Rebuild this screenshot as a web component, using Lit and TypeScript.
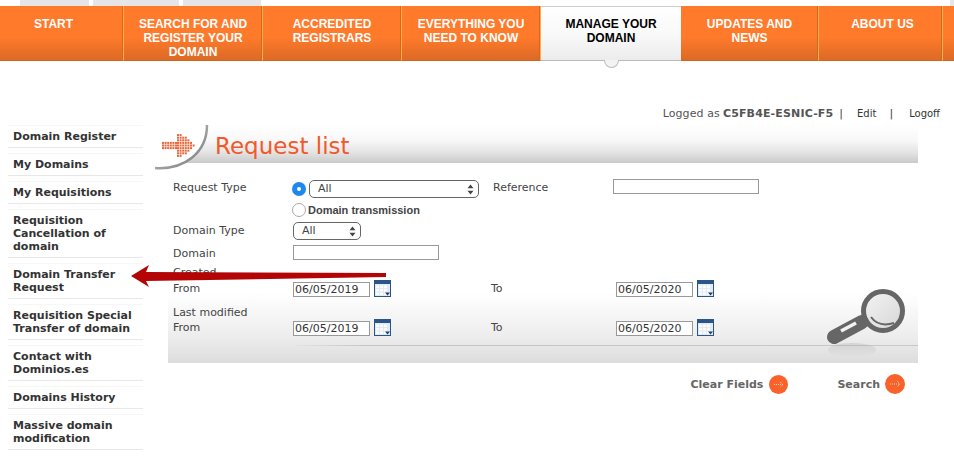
import { LitElement, html, css, svg } from "lit";
import { customElement } from "lit/decorators.js";

const NAV = [
  { t: "START", w: 124 },
  { t: "SEARCH FOR AND REGISTER YOUR DOMAIN", w: 139 },
  { t: "ACCREDITED REGISTRARS", w: 139 },
  { t: "EVERYTHING YOU NEED TO KNOW", w: 139 },
  { t: "MANAGE YOUR DOMAIN", w: 140, active: true },
  { t: "UPDATES AND NEWS", w: 138 },
  { t: "ABOUT US", w: 124 },
  { t: "", w: 11 },
];
const SIDE = [
  "Domain Register",
  "My Domains",
  "My Requisitions",
  "Requisition Cancellation of domain",
  "Domain Transfer Request",
  "Requisition Special Transfer of domain",
  "Contact with Dominios.es",
  "Domains History",
  "Massive domain modification",
];

const arrowDots = () => {
  const out: any[] = [];
  for (let i = 0; i < 6; i++) for (let r = -1; r <= 1; r++) out.push([i * 2.6, 12 + r * 2.6]);
  const spans = [4, 4, 3, 3, 2, 1, 0];
  spans.forEach((span, c) => {
    for (let r = -span; r <= span; r++) out.push([15 + c * 2.6, 12 + r * 2.6]);
  });
  return out;
};

const calendar = html`<svg class="cal" width="17" height="17" viewBox="0 0 17 17">
  <rect x="0" y="0" width="17" height="17" fill="#e3eaf3"/>
  <rect x="0" y="0" width="17" height="4" fill="#2a5588"/>
  <rect x="0" y="0" width="1" height="17" fill="#2a5588"/>
  <rect x="16" y="0" width="1" height="17" fill="#2a5588"/>
  <rect x="0" y="16" width="17" height="1" fill="#2a5588"/>
  ${[2, 6, 10].map((x) => [5.5, 9, 12.5].map((y) => svg`<rect x="${x}" y="${y}" width="3" height="2.5" fill="#fbfcfd"/>`))}
  <path d="M11 12.5h5l-2.5 3z" fill="#1f3f68"/>
</svg>`;

const arrows = html`<svg width="7" height="11" viewBox="0 0 7 11"><path d="M3.5 0.5L6.5 4.2H0.5zM3.5 10.5L0.5 6.8H6.5z" fill="#444"/></svg>`;

@customElement("app-root")
export class AppRoot extends LitElement {
  static styles = css`
    :host { display: block; position: relative; width: 954px; height: 471px; overflow: hidden; background: #fff;
      font-family: "DejaVu Sans", Verdana, sans-serif; font-size: 11px; color: #444; }
    .tabs { display: flex; height: 6px; padding-left: 20px; gap: 4px; position: relative; }
    .tabs i { display: block; height: 6px; background: #e6e6e6; }
    .tabs .end { position: absolute; right: 0; top: 0; width: 4px; }
    nav { display: flex; height: 55px; }
    .ni { box-sizing: border-box; flex: none; height: 55px; padding: 11px 12px 0; text-align: center; color: #fff;
      font: bold 12px/14px "Liberation Sans", Arial, sans-serif; position: relative;
      background: linear-gradient(#ff7a2b 0, #ff7a2b 58%, #dc6a25 100%); border-right: 1px solid #ffae4a;
      box-shadow: inset -1px 0 0 #d9661f; border-bottom: 1px solid #d0651f; }
    .ni:first-child { padding-right: 28px; }
    .ni:nth-child(7) { padding-left: 16px; }
    .ni:last-child { padding: 0; border-right: none; box-shadow: none; }
    .ni.active { color: #000; background: linear-gradient(#fff 0, #f9f9f9 50%, #ececec 100%); border-top: 1px solid #ccc;
      border-bottom: 1px solid #bbb; border-right: none; box-shadow: none; padding-top: 10px; padding-left: 20px; padding-right: 20px; }
    .notch { position: absolute; left: 63px; top: 53px; width: 13px; height: 7px; background: #f3f3f3;
      border: 1px solid #bbb; border-top: none; border-radius: 0 0 8px 8px; }
    .user { height: 64px; box-sizing: border-box; padding: 45px 14px 0 0; display: flex; justify-content: flex-end;
      line-height: 16px; color: #555; }
    .user .who { letter-spacing: 0.1px; }
    .user b { color: #555; margin-left: 3px; letter-spacing: 0.15px; } .user .sep { margin-left: 6px; color: #444; }
    .user a { color: #333; font-size: 10px; } .edit { margin-left: 14px; } .user .sep2 { margin-left: 13px; } .logoff { margin-left: 16px; }
    .body { display: flex; padding-left: 8px; }
    aside { width: 135px; margin-right: 25px; }
    .si { box-sizing: border-box; padding: 4px 5px 4px; margin-bottom: 5px; border-top: 1px solid #f6f6f6; border-bottom: 1px solid #e8e8e8;
      font-weight: bold; font-size: 11px; line-height: 13px; color: #333; }
    main { width: 750px; position: relative; }
    .band { height: 38px; box-sizing: border-box; padding-left: 47px; line-height: 42px; font-size: 23px; color: #f05a2a;
      background: linear-gradient(#fff 0, #f8f8f8 40%, #e4e4e4 72%, #c9c9c9 100%); position: relative; z-index: 1; }
    .swoosh { position: absolute; left: -14px; top: 0; }
    .panel { height: 200px; box-sizing: border-box; padding: 16px 0 0 5px; position: relative;
      background: linear-gradient(#fff 0, #fff 65%, #ececec 88%, #dcdcdc 100%); }
    .row { display: grid; grid-template-columns: 120px 200px 120px auto; line-height: 16px; justify-items: start; }
    .r1 { height: 21px; margin-top: 0; } .r2 { height: 19px; align-items: center; } .r3 { height: 24px; align-items: center; } .r4 { height: 20px; align-items: center; }
    .r5 { height: 37px; } .r6 { height: 37px; padding-top: 5px; box-sizing: border-box; line-height: 15px; }
    .dates { grid-template-columns: 120px 198px 125px auto; }
    .r1 .lab { padding-top: 1px; }
    .r4 > span { padding-top: 2px; }
    .ctl { display: flex; align-items: center; gap: 3px; height: 18px; margin-top: 1px; }
    .r2 .ctl { margin-top: 0; }
    .radio { box-sizing: border-box; width: 14px; height: 14px; border-radius: 50%; border: 1px solid #aaa; background: #fff; margin-left: -1px; flex: none; }
    .radio.on { background: #1e88ee; border: none; position: relative; }
    .radio.on::after { content: ""; position: absolute; left: 5px; top: 5px; width: 4px; height: 4px; border-radius: 50%; background: #fff; }
    .sel { box-sizing: border-box; height: 18px; border: 1px solid #666; border-radius: 5px; display: flex; align-items: center; justify-content: space-between;
      padding: 0 4px 0 8px; background: #fff; font-size: 11px; color: #444; }
    .sel.wide { width: 170px; } .sel.small { width: 68px; }
    input { box-sizing: border-box; height: 15px; border: 1px solid #999; padding: 0 1px; margin: 0; font: 11px "DejaVu Sans", Verdana, sans-serif; color: #333; background: #fff; border-radius: 0; outline: none; }
    .r4 input { margin-top: -1px; }
    .long { width: 146px; } .date { width: 77px; }
    .dt { display: flex; align-items: flex-end; gap: 4px; }
    .dt.top { margin-top: 17px; height: 17px; } .r6 .dt { margin-top: 14px; height: 17px; }
    .cal { display: block; }
    .tx { font: bold 11px "Liberation Sans", Arial, sans-serif; color: #444; }
    .stacked { padding-top: 2px; }
    .to { padding-top: 18px; } .to2 { padding-top: 15px; }
    .line { position: absolute; left: 120px; right: 0; top: 182px; height: 1px; background: linear-gradient(90deg, #e4e4e400, #c4c4c4 12%, #c8c8c8 100%); }
    .mag { position: absolute; left: 656px; top: 124px; }
    .actions { display: flex; justify-content: flex-end; align-items: center; height: 42px; padding-right: 13px; font-weight: bold; color: #666; font-size: 11px; }
    .act { display: flex; align-items: center; gap: 6px; } .act + .act { margin-left: 49px; gap: 5px; }
    .arrow { position: absolute; left: 125px; top: 260px; pointer-events: none; }
  `;
  render() {
    return html`
      <div class="tabs"><i style="width:69px"></i><i style="width:86px"></i><i style="width:78px"></i><i class="end"></i></div>
      <nav>${NAV.map((n) => html`<div class="ni ${n.active ? "active" : ""}" style="width:${n.w}px">${n.t}${n.active ? html`<span class="notch"></span>` : ""}</div>`)}</nav>
      <div class="user"><span class="who">Logged as</span><b>C5FB4E-ESNIC-F5</b><span class="sep">|</span><a class="edit">Edit</a><span class="sep sep2">|</span><a class="logoff">Logoff</a></div>
      <div class="body">
        <aside>${SIDE.map((s) => html`<div class="si">${s}</div>`)}</aside>
        <main>
          <div class="band">Request list
            <svg class="swoosh" width="56" height="46" viewBox="0 0 56 46">
              <defs><linearGradient id="sw" x1="0" y1="0" x2="1" y2="1"><stop offset="0" stop-color="#ccc"/><stop offset="0.6" stop-color="#999"/><stop offset="1" stop-color="#777"/></linearGradient></defs>
              <path d="M0 43C30 45 53 28 53 0L0 0Z" fill="#fff"/>
              <path d="M1 43C30 45 53 28 53 0" fill="none" stroke="url(#sw)" stroke-width="2.5"/>
              <g fill="#e8663a">${arrowDots().map(([x, y]) => svg`<rect x="${x + 8}" y="${y + 7.5}" width="2" height="2"/>`)}</g>
            </svg>
          </div>
          <div class="panel">
            <div class="row r1"><span class="lab">Request Type</span>
              <div class="ctl"><span class="radio on"></span><div class="sel wide"><span>All</span>${arrows}</div></div>
              <span class="lab">Reference</span><input class="long" /></div>
            <div class="row r2"><span></span><div class="ctl" style="gap:2px"><span class="radio"></span><span class="tx">Domain transmission</span></div></div>
            <div class="row r3"><span>Domain Type</span><div class="sel small"><span>All</span>${arrows}</div></div>
            <div class="row r4"><span>Domain</span><input class="long" /></div>
            <div class="row r5 dates"><span class="stacked">Created<br />From</span><div class="dt top"><input class="date" value="06/05/2019" />${calendar}</div><span class="to">To</span><div class="dt top"><input class="date" value="06/05/2020" />${calendar}</div></div>
            <div class="row r6 dates"><span>Last modified<br />From</span><div class="dt"><input class="date" value="06/05/2019" />${calendar}</div><span class="to2">To</span><div class="dt"><input class="date" value="06/05/2020" />${calendar}</div></div>
            <div class="line"></div>
            <svg class="mag" width="86" height="72" viewBox="0 0 86 72">
              <defs><linearGradient id="ref" x1="0" y1="0" x2="0" y2="1"><stop offset="0" stop-color="#aaa" stop-opacity=".35"/><stop offset="1" stop-color="#aaa" stop-opacity="0"/></linearGradient>
              <linearGradient id="gl" x1="0" y1="0" x2="1" y2="1"><stop offset="0" stop-color="#f4f4f4"/><stop offset="1" stop-color="#d6d6d6"/></linearGradient></defs>
              <ellipse cx="28" cy="63" rx="24" ry="7" fill="url(#ref)"/>
              <circle cx="59" cy="24" r="19.5" fill="url(#gl)" stroke="#666" stroke-width="5"/>
              <path d="M10 50L38 35" stroke="#666" stroke-width="14" stroke-linecap="round"/>
              <path d="M17 44L32 36" stroke="#f2f2f2" stroke-width="3.5"/>
              <path d="M47 30C52 37 60 39 70 36" fill="none" stroke="#666" stroke-width="2"/>
            </svg>
          </div>
          <div class="actions">
            <div class="act">Clear Fields <svg width="19" height="19" viewBox="0 0 19 19"><circle cx="9.5" cy="9.5" r="9.5" fill="#f9622a"/><path d="M5 9.5h9M11 7l3 2.5-3 2.5" fill="none" stroke="#ffc9a8" stroke-dasharray="1 1"/></svg></div>
            <div class="act">Search <svg width="20" height="20" viewBox="0 0 20 20"><circle cx="10" cy="10" r="10" fill="#f9622a"/><path d="M5 10h10M12 7l3 3-3 3" fill="none" stroke="#ffc9a8" stroke-dasharray="1 1"/></svg></div>
          </div>
        </main>
      </div>
      <svg class="arrow" width="270" height="34" viewBox="0 0 270 34"><path d="M6 16L24 5L21 12L261 13L261 17L21 21L24 27Z" fill="#b30505"/></svg>
    `;
  }
}
